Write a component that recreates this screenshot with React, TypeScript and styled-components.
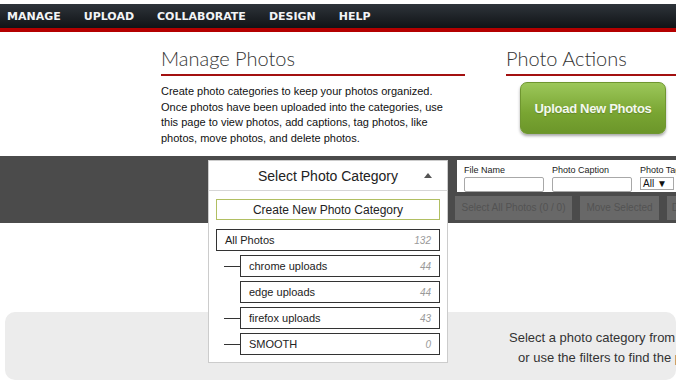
import React from 'react'
import styled, { createGlobalStyle } from 'styled-components'

const GlobalStyle = createGlobalStyle`
    html, body {
        margin: 0;
        padding: 0;
        overflow: hidden;
        background: #fff;
        font-family: Arial, "Liberation Sans", sans-serif;
    }
`

const Page = styled.div`
    width: 676px;
    height: 381px;
    overflow: hidden;
    padding-top: 4px;
    box-sizing: border-box;
`

const NavBar = styled.nav`
    display: flex;
    align-items: center;
    height: 24px;
    padding-left: 7px;
    gap: 23px;
    background: linear-gradient(#2e343a, #101316);
    border-bottom: 4px solid #b40000;
`

const NavItem = styled.span`
    color: #f2f4f6;
    font-family: "DejaVu Sans", Verdana, sans-serif;
    font-weight: bold;
    font-size: 11px;
`

const Intro = styled.section`
    display: flex;
    padding-left: 161px;
    padding-top: 14px;
    gap: 41px;
    height: 124px;
    box-sizing: border-box;
`

const Column = styled.div<{ $width: number }>`
    width: ${p => p.$width}px;
    flex-shrink: 0;
`

const Heading = styled.h1`
    margin: 0;
    font-family: Lato, "Open Sans", sans-serif;
    font-weight: 300;
    font-size: 20px;
    color: #333;
    line-height: 24px;
    padding-bottom: 4px;
    border-bottom: 2px solid #a31010;
`

const Blurb = styled.p`
    margin: 8px 0 0;
    width: 292px;
    font-size: 11px;
    line-height: 15.6px;
    color: #111;
`

const UploadButton = styled.button`
    margin: 6px 0 0 14px;
    width: 146px;
    height: 52px;
    border: 1px solid #6f9630;
    border-radius: 7px;
    background: linear-gradient(#9cc75a, #79a532 60%, #6c962a);
    box-shadow: 0 2px 3px rgba(0, 0, 0, 0.35);
    color: #f4f8ee;
    font-family: Arial, "Liberation Sans", sans-serif;
    font-weight: bold;
    font-size: 13px;
    letter-spacing: -0.3px;
    text-shadow: 0 1px 1px rgba(0, 0, 0, 0.2);
`

const Band = styled.section`
    display: flex;
    align-items: flex-start;
    gap: 9px;
    height: 67px;
    padding: 4px 0 0 208px;
    box-sizing: border-box;
    background: #4b4b4b;
`

const DropWrap = styled.div`
    position: relative;
    width: 240px;
    flex-shrink: 0;
    z-index: 2;
`

const DropHeader = styled.div`
    display: flex;
    align-items: center;
    justify-content: center;
    height: 31px;
    background: #fff;
    border: 1px solid #ccc;
    border-bottom-color: #d6d6d6;
    box-sizing: border-box;
    font-size: 14px;
    color: #222;
    position: relative;
`

const Caret = styled.span`
    position: absolute;
    right: 15px;
    top: 12px;
    width: 0;
    height: 0;
    border-left: 4px solid transparent;
    border-right: 4px solid transparent;
    border-bottom: 5px solid #555;
`

const DropMenu = styled.div`
    position: absolute;
    top: 100%;
    left: 0;
    right: 0;
    background: #fff;
    border: 1px solid #ccc;
    border-top: none;
    padding: 8px 7px 7px 7px;
    box-sizing: border-box;
    display: flex;
    flex-direction: column;
    gap: 4px;
`

const CreateButton = styled.button`
    height: 21px;
    margin-bottom: 5px;
    background: #fff;
    border: 1px solid #b1bf62;
    font-family: Arial, "Liberation Sans", sans-serif;
    font-size: 12px;
    color: #222;
`

const CategoryRow = styled.div<{ $child?: boolean }>`
    position: relative;
    display: flex;
    align-items: center;
    justify-content: space-between;
    height: 22px;
    margin-left: ${p => (p.$child ? 24 : 0)}px;
    padding: 0 8px;
    border: 1px solid #333;
    box-sizing: border-box;
    font-size: 11px;
    color: #222;
`

const Connector = styled.span`
    position: absolute;
    left: -17px;
    top: 50%;
    width: 16px;
    border-top: 1px solid #333;
`

const Count = styled.span`
    font-style: italic;
    color: #9a9a9a;
    font-size: 10px;
`

const Filters = styled.div`
    flex: 1;
    display: flex;
    flex-direction: column;
    gap: 4px;
`

const FilterBox = styled.div`
    display: flex;
    gap: 8px;
    height: 32px;
    padding: 4px 0 0 7px;
    box-sizing: border-box;
    background: #fff;
`

const Field = styled.label<{ $width: number }>`
    display: flex;
    flex-direction: column;
    width: ${p => p.$width}px;
    flex-shrink: 0;
    font-size: 9px;
    color: #222;
    line-height: 12px;
    white-space: nowrap;
`

const TextInput = styled.div`
    height: 13px;
    margin-top: 1px;
    border: 1px solid #a8a8a8;
    border-radius: 2px;
`

const TagSelect = styled.div`
    width: 30px;
    height: 11px;
    margin-top: 1px;
    border: 1px solid #a8a8a8;
    font-size: 10px;
    line-height: 11px;
    padding-left: 2px;
    color: #111;
`

const ActionRow = styled.div`
    display: flex;
    gap: 8px;
    margin-left: -2px;
`

const GreyButton = styled.div<{ $width: number }>`
    width: ${p => p.$width}px;
    flex-shrink: 0;
    height: 24px;
    line-height: 24px;
    text-align: center;
    background: #686868;
    color: #535353;
    font-size: 10px;
    white-space: nowrap;
    overflow: hidden;
`

const Message = styled.section`
    margin: 89px 0 0 5px;
    height: 68px;
    border-radius: 10px;
    background: #ececec;
    padding: 16px 0 0 504px;
    box-sizing: border-box;
    font-size: 13px;
    line-height: 20px;
    color: #333;
    white-space: nowrap;
`

const MessageLine = styled.div<{ $indent?: number }>`
    padding-left: ${p => p.$indent || 0}px;
`

const categories = [
    { name: 'chrome uploads', count: 44, line: true },
    { name: 'edge uploads', count: 44, line: false },
    { name: 'firefox uploads', count: 43, line: true },
    { name: 'SMOOTH', count: 0, line: true },
]

export default function App() {
    return (
        <Page>
            <GlobalStyle />
            <NavBar>
                {['MANAGE', 'UPLOAD', 'COLLABORATE', 'DESIGN', 'HELP'].map(item => (
                    <NavItem key={item}>{item}</NavItem>
                ))}
            </NavBar>
            <Intro>
                <Column $width={304}>
                    <Heading>Manage Photos</Heading>
                    <Blurb>
                        Create photo categories to keep your photos organized.
                        Once photos have been uploaded into the categories, use
                        this page to view photos, add captions, tag photos, like
                        photos, move photos, and delete photos.
                    </Blurb>
                </Column>
                <Column $width={200}>
                    <Heading>Photo Actions</Heading>
                    <UploadButton>Upload New Photos</UploadButton>
                </Column>
            </Intro>
            <Band>
                <DropWrap>
                    <DropHeader>
                        Select Photo Category
                        <Caret />
                    </DropHeader>
                    <DropMenu>
                        <CreateButton>Create New Photo Category</CreateButton>
                        <CategoryRow>
                            All Photos <Count>132</Count>
                        </CategoryRow>
                        {categories.map(c => (
                            <CategoryRow $child key={c.name}>
                                {c.line && <Connector />}
                                {c.name}
                                <Count>{c.count}</Count>
                            </CategoryRow>
                        ))}
                    </DropMenu>
                </DropWrap>
                <Filters>
                    <FilterBox>
                        <Field $width={80}>
                            File Name
                            <TextInput />
                        </Field>
                        <Field $width={80}>
                            Photo Caption
                            <TextInput />
                        </Field>
                        <Field $width={60}>
                            Photo Tags
                            <TagSelect>All ▼</TagSelect>
                        </Field>
                    </FilterBox>
                    <ActionRow>
                        <GreyButton $width={117}>Select All Photos (0 / 0)</GreyButton>
                        <GreyButton $width={79}>Move Selected</GreyButton>
                        <GreyButton $width={80}>Delete Selected</GreyButton>
                    </ActionRow>
                </Filters>
            </Band>
            <Message>
                <MessageLine>Select a photo category from the menu above</MessageLine>
                <MessageLine $indent={9}>or use the filters to find the photos you want.</MessageLine>
            </Message>
        </Page>
    )
}
